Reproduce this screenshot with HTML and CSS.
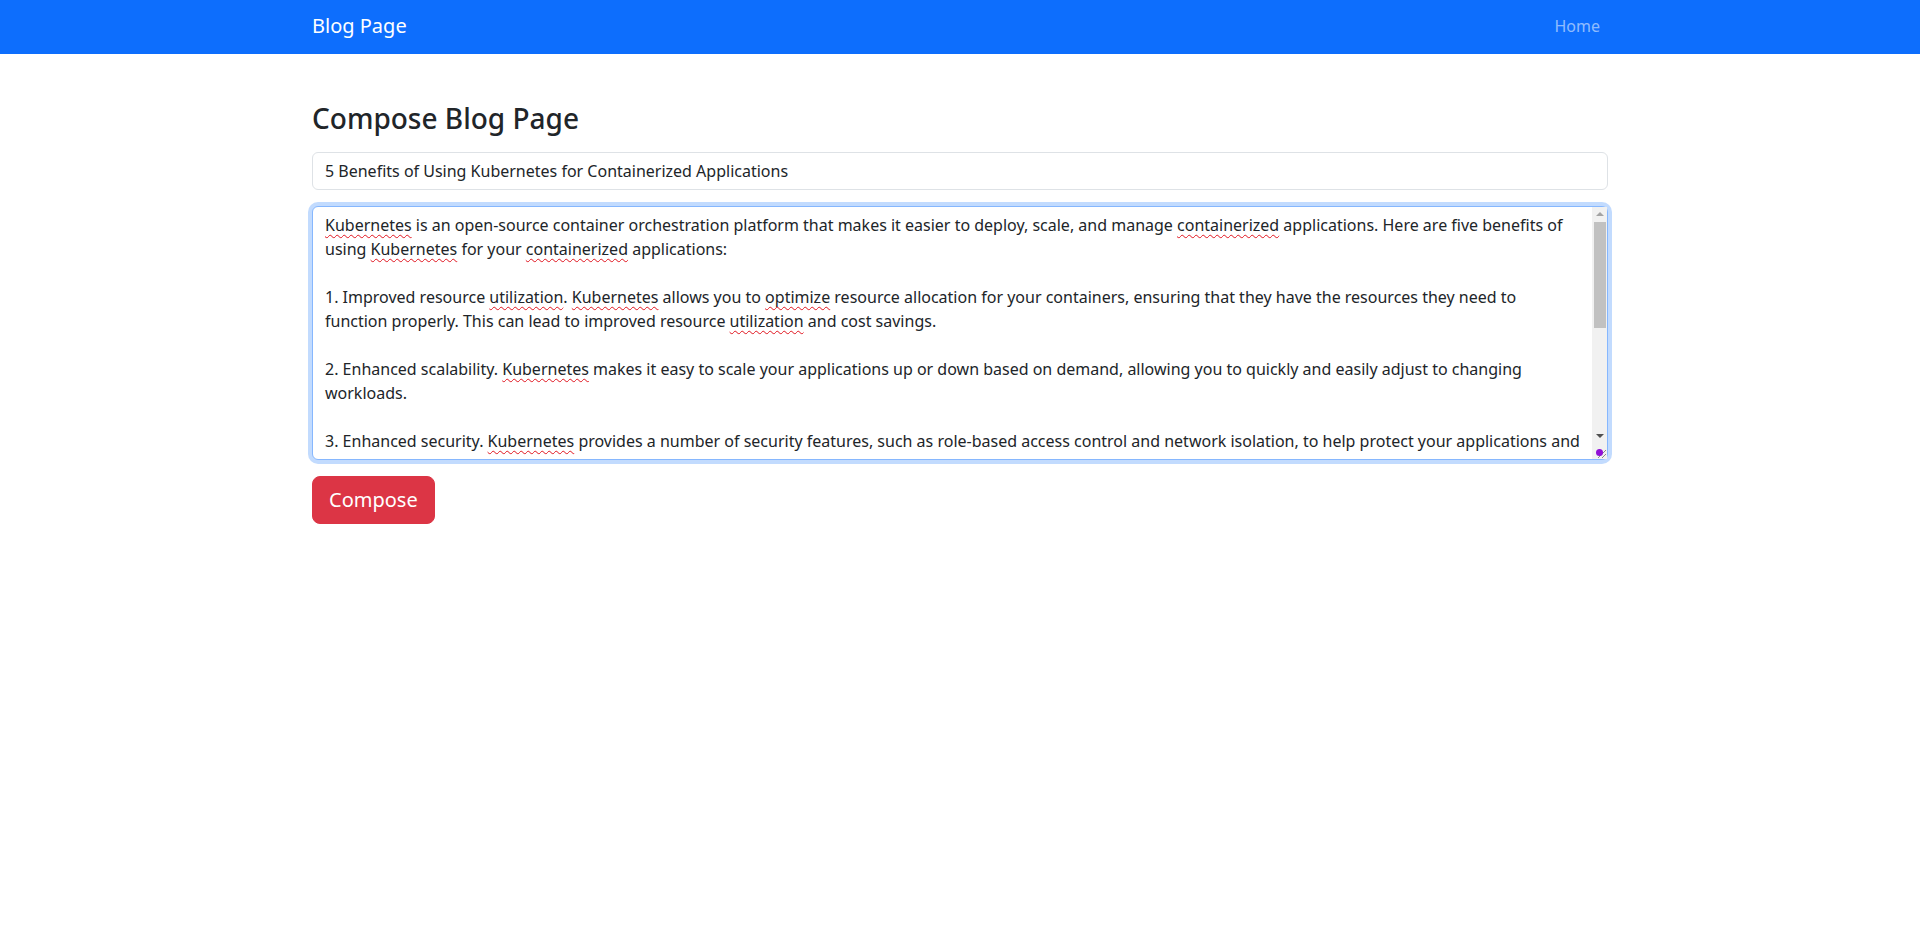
FILE: index.html
```html
<!DOCTYPE html>
<html lang="en">
<head>
<meta charset="utf-8">
<title>Blog Page</title>
<link rel="stylesheet" href="styles.css">
</head>
<body>
<nav class="navbar">
  <div class="nav-inner">
    <a class="brand" href="#">Blog Page</a>
    <a class="nav-link" href="#">Home</a>
  </div>
</nav>
<main class="container">
  <h3 class="page-title">Compose Blog Page</h3>
  <form class="compose-form">
    <input class="form-control title-input" type="text" value="5 Benefits of Using Kubernetes for Containerized Applications">
    <div class="editor-wrap">
      <div class="form-control editor" contenteditable="true"><span class="sp">Kubernetes</span> is an open-source container orchestration platform that makes it easier to deploy, scale, and manage <span class="sp">containerized</span> applications. Here are five benefits of using <span class="sp">Kubernetes</span> for your <span class="sp">containerized</span> applications:

1. Improved resource <span class="sp">utilization</span>. <span class="sp">Kubernetes</span> allows you to <span class="sp">optimize</span> resource allocation for your containers, ensuring that they have the resources they need to function properly. This can lead to improved resource <span class="sp">utilization</span> and cost savings.

2. Enhanced scalability. <span class="sp">Kubernetes</span> makes it easy to scale your applications up or down based on demand, allowing you to quickly and easily adjust to changing workloads.

3. Enhanced security. <span class="sp">Kubernetes</span> provides a number of security features, such as role-based access control and network isolation, to help protect your applications and data.

4. Improved reliability. <span class="sp">Kubernetes</span> automatically monitors the health of your containers and restarts or replaces them if they fail, helping to ensure that your applications are always available.

5. Simplified management. <span class="sp">Kubernetes</span> provides a unified platform for managing your <span class="sp">containerized</span> applications, making it easier to deploy, update, and monitor your applications across multiple environments.

Overall, <span class="sp">Kubernetes</span> is a powerful tool for managing <span class="sp">containerized</span> applications, offering a range of benefits that can help you improve the efficiency, scalability, and reliability of your applications.</div>
      <div class="scrollbar" aria-hidden="true">
        <div class="sb-btn">
          <svg width="8" height="4" viewBox="0 0 8 4"><polygon points="4,0 8,4 0,4" fill="#a3a3a3"/></svg>
        </div>
        <div class="sb-track"><div class="sb-thumb"></div></div>
        <div class="sb-btn">
          <svg width="8" height="4" viewBox="0 0 8 4"><polygon points="0,0 8,0 4,4" fill="#505050"/></svg>
        </div>
        <div class="sb-corner">
          <svg width="15" height="15" viewBox="0 0 15 15"><path d="M14 6 L6 14 M14 10 L10 14" stroke="#8a8a8a" stroke-width="1" fill="none"/></svg>
        </div>
      </div>
      <span class="ext-dot"></span>
    </div>
    <button class="btn-compose" type="button">Compose</button>
  </form>
</main>
</body>
</html>
```

FILE: styles.css
```css
* {
  box-sizing: border-box;
}

body {
  margin: 0;
  font-family: "Noto Sans", sans-serif;
  font-size: 16px;
  line-height: 1.5;
  color: #212529;
  background: #fff;
}

.navbar {
  background: #0d6efd;
  height: 54px;
  padding-bottom: 3px;
  display: flex;
  align-items: center;
}

.nav-inner {
  width: 1296px;
  margin: 0 auto;
  display: flex;
  justify-content: space-between;
  align-items: center;
}

.brand {
  color: #fff;
  font-size: 20px;
  line-height: 30px;
  text-decoration: none;
}

.nav-link {
  color: rgba(255, 255, 255, 0.55);
  font-size: 16px;
  line-height: 24px;
  padding: 8px;
  text-decoration: none;
}

.container {
  width: 1296px;
  margin: 0 auto;
}

.page-title {
  font-size: 28px;
  font-weight: 500;
  line-height: 1.2;
  margin: 48px 0 16px;
}

.compose-form {
  display: flex;
  flex-direction: column;
  align-items: flex-start;
}

.form-control {
  display: block;
  width: 100%;
  font-family: inherit;
  font-size: 16px;
  line-height: 24px;
  color: #212529;
  background: #fff;
  border: 1px solid #dee2e6;
  border-radius: 6px;
  padding: 6px 12px;
  outline: none;
}

.title-input {
  height: 38px;
  margin-bottom: 16px;
}

.editor-wrap {
  position: relative;
  width: 100%;
  margin-bottom: 16px;
}

.editor {
  height: 254px;
  overflow: hidden;
  padding-right: 27px;
  white-space: pre-wrap;
  border-color: #86b7fe;
  box-shadow: 0 0 0 4px rgba(13, 110, 253, 0.25);
}

.scrollbar {
  position: absolute;
  top: 1px;
  right: 1px;
  bottom: 1px;
  width: 15px;
  display: flex;
  flex-direction: column;
  background: #f1f1f1;
}

.sb-btn {
  height: 15px;
  flex: none;
  display: flex;
  align-items: center;
  justify-content: center;
}

.sb-btn svg {
  display: block;
}

.sb-track {
  flex: 1;
  padding: 0 1px 0 2px;
}

.sb-thumb {
  height: 106px;
  background: #c1c1c1;
}

.sb-corner {
  height: 15px;
  flex: none;
}

.sb-corner svg {
  display: block;
}

.sp {
  text-decoration: underline wavy #e0141e;
  text-decoration-thickness: 1px;
  text-underline-offset: 3px;
  text-decoration-skip-ink: none;
}

.ext-dot {
  position: absolute;
  right: 5px;
  bottom: 4px;
  width: 7px;
  height: 7px;
  border-radius: 50%;
  background: #8f0fd6;
}

.btn-compose {
  font-family: inherit;
  font-size: 20px;
  line-height: 30px;
  padding: 8px 16px;
  color: #fff;
  background: #dc3545;
  border: 1px solid #dc3545;
  border-radius: 8px;
  cursor: pointer;
}
```
